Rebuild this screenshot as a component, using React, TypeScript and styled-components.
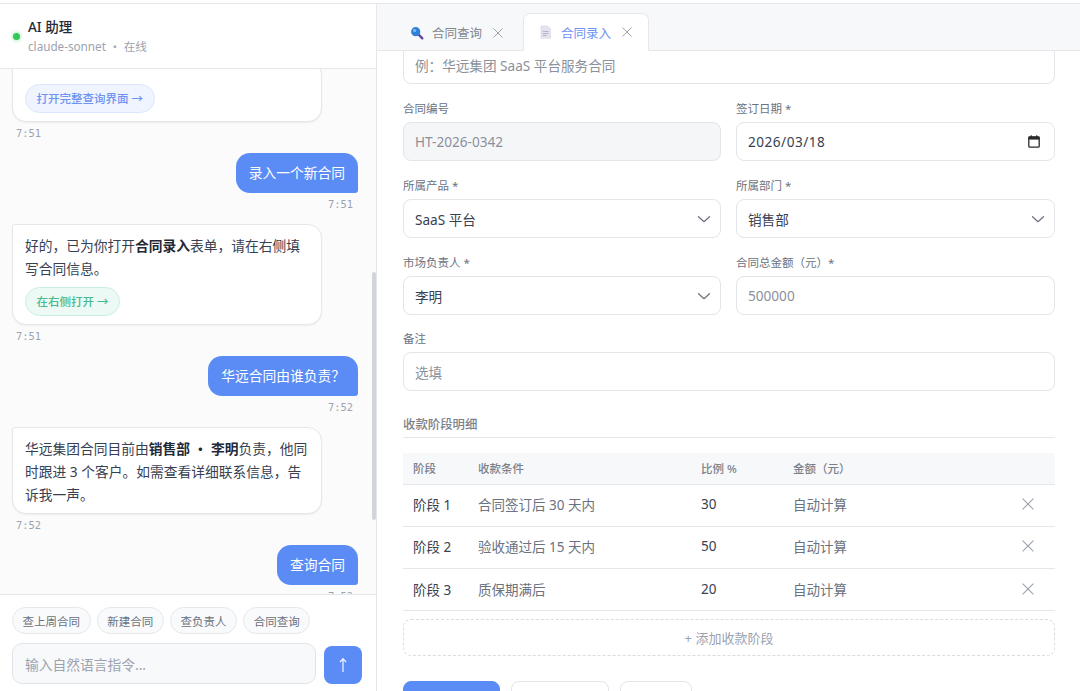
import React from "react";
import styled, { createGlobalStyle } from "styled-components";

const Global = createGlobalStyle`
  html, body { margin: 0; padding: 0; background: #fff; }
  body { font-family: "Noto Sans", "Noto Sans CJK SC", sans-serif; color: #374151; }
  * { box-sizing: border-box; }
`;

const Page = styled.div`
  width: 1080px; height: 691px; overflow: hidden; display: flex; flex-direction: column;
  padding-top: 3px;
`;
const Main = styled.div`
  flex: 1; min-height: 0; display: flex; border-top: 1px solid #e5e7eb;
`;
const ChatPanel = styled.section`
  width: 377px; flex: none; display: flex; flex-direction: column; border-right: 1px solid #e5e7eb;
  background: #fff; min-height: 0;
`;
const ChatHeader = styled.header`
  height: 65px; flex: none; display: flex; align-items: center; gap: 8px; padding: 0 13px;
  border-bottom: 1px solid #e5e7eb;
`;
const Dot = styled.span`
  width: 7px; height: 7px; border-radius: 50%; background: #34c759; box-shadow: 0 0 4px #34c75999; flex: none; margin-top: 1px;
`;
const HeaderText = styled.div`display: flex; flex-direction: column; gap: 1px;`;
const HeaderTitle = styled.div`font-size: 13.5px; line-height: 20px; font-weight: 500; color: #1f2937;`;
const HeaderSub = styled.div`font-size: 11.7px; line-height: 17px; color: #9ca3af;`;
const Messages = styled.div`
  flex: 1; min-height: 0; overflow: hidden; position: relative; background: #fbfbfc;
`;
const MessageList = styled.div`
  display: flex; flex-direction: column; padding: 0 18px 0 12px; margin-top: -8px;
`;
const Thumb = styled.div`
  position: absolute; right: 0; top: 203px; width: 4px; height: 248px; background: #d1d5db; border-radius: 2px;
`;
const Card = styled.div`
  width: 310px; background: #fff; border: 1px solid #e5e7eb; border-radius: 3px 14px 14px 14px;
  padding: 9px 12px 7px; font-size: 13.75px; line-height: 23px; color: #374151;
  box-shadow: 0 1px 2px rgba(0,0,0,.06);
  strong { font-weight: 700; color: #1f2937; }
`;
const CardTop = styled.div`height: 6px;`;
const Chip = styled.span<{ $green?: boolean }>`
  display: inline-flex; align-items: center; height: 29px; margin: 7px 0 1px; padding: 0 10.5px; border-radius: 15px;
  font-size: 11.5px; font-weight: 500;
  background: ${p => (p.$green ? "#ecf9f4" : "#eff4ff")};
  border: 1px solid ${p => (p.$green ? "#c9efdf" : "#dbe6fe")};
  color: ${p => (p.$green ? "#45bb8f" : "#6f93f2")};
`;
const Time = styled.div<{ $right?: boolean }>`
  font-family: "DejaVu Sans Mono", monospace; font-size: 10.4px; line-height: 14px; color: #9ca3af;
  margin: 4px 5px 13px 4px; align-self: ${p => (p.$right ? "flex-end" : "flex-start")};
`;
const Bubble = styled.div`
  align-self: flex-end; background: #5b8cf6; color: #fff; font-size: 13.75px; line-height: 20px;
  padding: 10px 13px; border-radius: 14px 14px 3px 14px;
`;
const ChatFooter = styled.footer`
  flex: none; height: 97px; border-top: 1px solid #e5e7eb; padding: 12px 14px 0 12px; background: #fff;
`;
const Quick = styled.div`display: flex; gap: 6px; margin-bottom: 9px;`;
const QuickBtn = styled.span`
  height: 27px; display: inline-flex; align-items: center; padding: 0 9.6px; border: 1px solid #e5e7eb; border-radius: 14px;
  font-size: 11.5px; color: #6b7280; background: #f9fafb;
`;
const InputRow = styled.div`display: flex; align-items: flex-end; gap: 8px;`;
const ChatInput = styled.div`
  width: 304px; height: 41px; border: 1px solid #e0e3e8; border-radius: 10px; background: #f8f9fb;
  display: flex; align-items: center; padding: 0 12px; font-size: 13.75px; color: #9ca3af;
`;
const Send = styled.div`
  width: 38px; height: 38px; border-radius: 8px; background: #5b8cf6; color: #fff; display: flex; align-items: center; justify-content: center;
`;

const Right = styled.section`flex: 1; min-width: 0; display: flex; flex-direction: column; background: #fff;`;
const TabBar = styled.nav`
  height: 47px; flex: none; background: #f7f8fa; border-bottom: 1px solid #e5e7eb; display: flex; align-items: flex-end; padding-left: 17px; gap: 3px;
`;
const Tab = styled.div<{ $active?: boolean }>`
  height: ${p => (p.$active ? "38px" : "37px")}; display: flex; align-items: center; gap: 8px; padding: 0 16px 0 15px;
  margin-bottom: -1px; font-size: 12.5px;
  color: ${p => (p.$active ? "#6f93f2" : "#83888f")};
  background: ${p => (p.$active ? "#fff" : "transparent")};
  border: 1px solid ${p => (p.$active ? "#e5e7eb" : "transparent")};
  border-bottom: 1px solid ${p => (p.$active ? "#fff" : "transparent")};
  border-radius: 7px 7px 0 0;
`;
const TabClose = styled.span`display: inline-flex; margin-left: 3px;`;
const FormScroll = styled.div`flex: 1; min-height: 0; overflow: hidden; padding: 0 25px 0 26px;`;
const Form = styled.div`margin-top: -6px; display: flex; flex-direction: column;`;
const Control = styled.div<{ $disabled?: boolean }>`
  height: 39px; border: 1px solid #e2e5ea; border-radius: 8px; padding: 0 9px 0 11px;
  display: flex; align-items: center; justify-content: space-between; font-size: 13.6px; color: #374151;
  background: ${p => (p.$disabled ? "#f5f6f8" : "#fff")};
`;
const Placeholder = styled.span`color: #8b919b;`;
const DateText = styled.span`letter-spacing: .5px;`;
const Grid = styled.div`display: grid; grid-template-columns: 318px 319px; column-gap: 15px; row-gap: 16px; margin-top: 16px;`;
const NoteGrid = styled(Grid)`grid-template-columns: 1fr; margin-top: 15px;`;
const Field = styled.div`display: flex; flex-direction: column; gap: 4px;`;
const Label = styled.label`font-size: 11.5px; line-height: 18px; color: #6b7280;`;
const Section = styled.h3`
  margin: 24px 0 15px; padding-top: 1px; height: 23px; font-size: 12.4px; line-height: 17px; font-weight: 500; color: #7b818a; border-bottom: 1px solid #e5e7eb;
`;
const Table = styled.table`width: 100%; border-collapse: collapse; table-layout: fixed;`;
const Th = styled.th<{ $w?: number }>`
  height: 31px; background: #f7f8fa; font-size: 11.5px; font-weight: 500; color: #7b818a; text-align: left; padding: 0 10px;
  border-bottom: 1px solid #e5e7eb; width: ${p => (p.$w ? `${p.$w}px` : "auto")};
`;
const Td = styled.td<{ $strong?: boolean }>`
  height: 42.3px; padding: 0 10px 2px; font-size: 13.5px; border-bottom: 1px solid #e5e7eb;
  color: ${p => (p.$strong ? "#374151" : "#6b7280")};
`;
const Remove = styled.td`
  padding: 0 21px 2px 0; text-align: right; border-bottom: 1px solid #e5e7eb; color: #9ca3af; line-height: 0;
`;
const AddRow = styled.div`
  margin-top: 8px; height: 37px; border: 1px dashed #d9dce1; border-radius: 8px; display: flex; align-items: center; justify-content: center; gap: 3px;
  font-size: 13px; color: #9ca3af;
`;
const Actions = styled.div`display: flex; gap: 11px; margin-top: 25px;`;
const Btn = styled.div<{ $w: number; $primary?: boolean }>`
  width: ${p => p.$w}px; height: 38px; border-radius: 8px;
  background: ${p => (p.$primary ? "#5b8cf6" : "#fff")};
  border: 1px solid ${p => (p.$primary ? "#5b8cf6" : "#e2e5ea")};
`;
const CalendarWrap = styled.span`display: inline-flex; margin-right: 5px;`;

const Chevron = () => (
  <svg width="14" height="14" viewBox="0 0 14 14" fill="none" stroke="#6b7280" strokeWidth="1.25" strokeLinecap="round" strokeLinejoin="round"><path d="M1.5 4.7 7 9.7l5.5-5" /></svg>
);
const Close = ({ size = 10, color = "#9ca3af" }: { size?: number; color?: string }) => (
  <svg width={size} height={size} viewBox="0 0 10 10" fill="none" stroke={color} strokeWidth={size > 10 ? 0.95 : 1}><path d="M.5.5l9 9M9.5.5l-9 9" /></svg>
);
const Calendar = () => (
  <svg width="12" height="13" viewBox="0 0 12 13" fill="none"><rect x=".8" y="2" width="10.4" height="10.2" rx="1" stroke="#2b2b2b" strokeWidth="1.3" /><rect x=".5" y="1.6" width="11" height="3" fill="#2b2b2b" /><rect x="2.6" y=".4" width="1.4" height="2" fill="#2b2b2b" /><rect x="8" y=".4" width="1.4" height="2" fill="#2b2b2b" /></svg>
);
const SearchIcon = () => (
  <svg width="14" height="14" viewBox="0 0 14 14"><path d="M8.7 8.7l3.6 3.6" stroke="#5b4a9e" strokeWidth="2.4" strokeLinecap="round" /><circle cx="5.7" cy="5.7" r="4.6" fill="#2f7fd6" /><circle cx="4.6" cy="4.5" r="1.6" fill="#7cc0f2" /></svg>
);
const DocIcon = () => (
  <svg width="14" height="14" viewBox="0 0 14 14"><path d="M2 1h6.5l3 3v9.2H2Z" fill="#e6e2ef" stroke="#d6d1e3" strokeWidth=".6" /><path d="M3.8 6.5h5.8M3.8 8.5h5.8M3.8 10.5h4" stroke="#a9a4bc" strokeWidth=".8" /></svg>
);

const rows = [
  ["阶段 1", "合同签订后 30 天内", "30"],
  ["阶段 2", "验收通过后 15 天内", "50"],
  ["阶段 3", "质保期满后", "20"],
];

export default function App() {
  return (
    <Page>
      <Global />
      <Main>
        <ChatPanel>
          <ChatHeader>
            <Dot />
            <HeaderText>
              <HeaderTitle>AI 助理</HeaderTitle>
              <HeaderSub>claude-sonnet ・ 在线</HeaderSub>
            </HeaderText>
          </ChatHeader>
          <Messages>
            <MessageList>
              <Card><CardTop /><Chip>打开完整查询界面 →</Chip></Card>
              <Time>7:51</Time>
              <Bubble>录入一个新合同</Bubble>
              <Time $right>7:51</Time>
              <Card>好的，已为你打开<strong>合同录入</strong>表单，请在右侧填写合同信息。<br /><Chip $green>在右侧打开 →</Chip></Card>
              <Time>7:51</Time>
              <Bubble>华远合同由谁负责？</Bubble>
              <Time $right>7:52</Time>
              <Card>华远集团合同目前由<strong>销售部 ・ 李明</strong>负责，他同时跟进 3 个客户。如需查看详细联系信息，告诉我一声。</Card>
              <Time>7:52</Time>
              <Bubble>查询合同</Bubble>
              <Time $right>7:52</Time>
            </MessageList>
            <Thumb />
          </Messages>
          <ChatFooter>
            <Quick>
              <QuickBtn>查上周合同</QuickBtn>
              <QuickBtn>新建合同</QuickBtn>
              <QuickBtn>查负责人</QuickBtn>
              <QuickBtn>合同查询</QuickBtn>
            </Quick>
            <InputRow>
              <ChatInput>输入自然语言指令...</ChatInput>
              <Send>
                <svg width="12" height="16" viewBox="0 0 12 16" fill="none" stroke="#e8efff" strokeWidth="1.3"><path d="M6 15V2M3 5 6 1.8 9 5" /></svg>
              </Send>
            </InputRow>
          </ChatFooter>
        </ChatPanel>
        <Right>
          <TabBar>
            <Tab><SearchIcon />合同查询<TabClose><Close /></TabClose></Tab>
            <Tab $active><DocIcon />合同录入<TabClose><Close /></TabClose></Tab>
          </TabBar>
          <FormScroll>
            <Form>
              <Control><Placeholder>例：华远集团 SaaS 平台服务合同</Placeholder></Control>
              <Grid>
                <Field><Label>合同编号</Label><Control $disabled><Placeholder>HT-2026-0342</Placeholder></Control></Field>
                <Field><Label>签订日期 *</Label><Control><DateText>2026/03/18</DateText><CalendarWrap><Calendar /></CalendarWrap></Control></Field>
                <Field><Label>所属产品 *</Label><Control>SaaS 平台<Chevron /></Control></Field>
                <Field><Label>所属部门 *</Label><Control>销售部<Chevron /></Control></Field>
                <Field><Label>市场负责人 *</Label><Control>李明<Chevron /></Control></Field>
                <Field><Label>合同总金额（元）*</Label><Control><Placeholder>500000</Placeholder></Control></Field>
              </Grid>
              <NoteGrid>
                <Field><Label>备注</Label><Control><Placeholder>选填</Placeholder></Control></Field>
              </NoteGrid>
              <Section>收款阶段明细</Section>
              <Table>
                <thead>
                  <tr>
                    <Th $w={65}>阶段</Th>
                    <Th $w={223}>收款条件</Th>
                    <Th $w={92}>比例 %</Th>
                    <Th>金额（元）</Th>
                    <Th $w={50} />
                  </tr>
                </thead>
                <tbody>
                  {rows.map(r => (
                    <tr key={r[0]}>
                      <Td $strong>{r[0]}</Td>
                      <Td>{r[1]}</Td>
                      <Td $strong>{r[2]}</Td>
                      <Td>自动计算</Td>
                      <Remove><Close size={12} /></Remove>
                    </tr>
                  ))}
                </tbody>
              </Table>
              <AddRow>+ 添加收款阶段</AddRow>
              <Actions>
                <Btn $w={97} $primary />
                <Btn $w={98} />
                <Btn $w={72} />
              </Actions>
            </Form>
          </FormScroll>
        </Right>
      </Main>
    </Page>
  );
}
